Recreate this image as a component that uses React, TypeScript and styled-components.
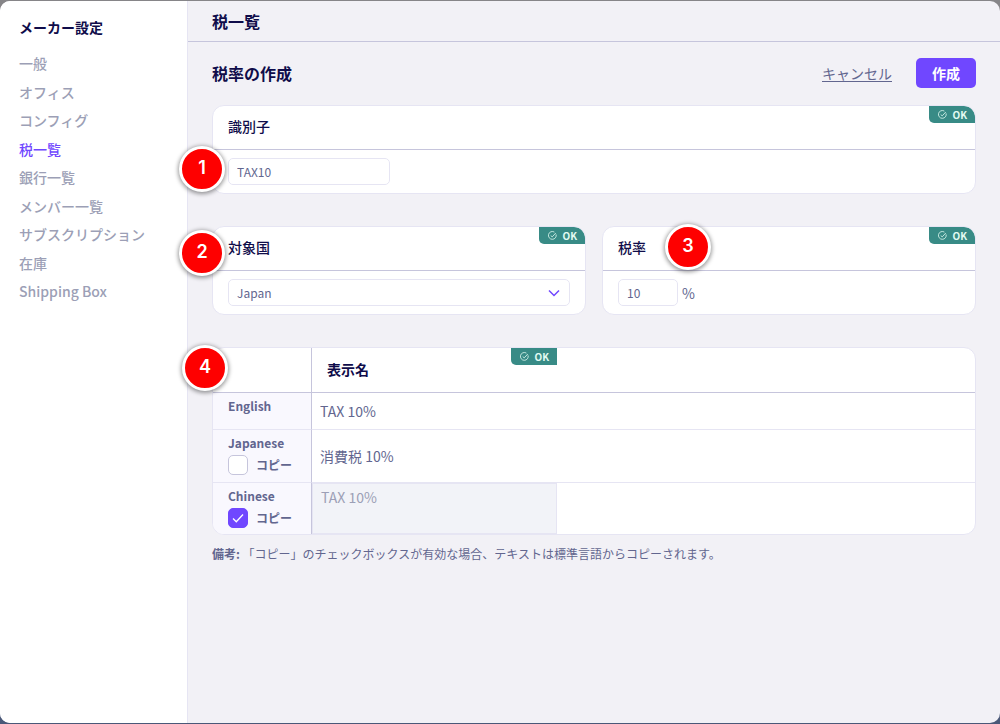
import React, { useState } from "react";
import styled, { createGlobalStyle, css } from "styled-components";

const color = {
  ink: "#0f0c4a",
  text: "#62668f",
  muted: "#9c9fb6",
  violet: "#7047ff",
  teal: "#388b86",
  page: "#f2f1f6",
  border: "#e6e5f3",
  line: "#c6c5dc",
};

const GlobalStyle = createGlobalStyle`
  *, *::before, *::after { box-sizing: border-box; }
  body {
    margin: 0;
    color: ${color.text};
    background: linear-gradient(#868588 0, #868588 50%, #4a5878 100%);
    font-family: "Noto Sans CJK JP", "Noto Sans", sans-serif;
    font-size: 14px;
    line-height: 20px;
  }
  button, input, select, textarea { font: inherit; color: inherit; }
`;

const Dialog = styled.div`
  display: flex;
  min-height: calc(100vh - 2px);
  margin: 1px 0;
  border-radius: 10px;
  background: ${color.page};
  overflow: hidden;
`;

const Sidebar = styled.nav`
  flex: 0 0 188px;
  padding: 16px 19px;
  background: #fff;
  border-right: 1px solid ${color.border};
`;

const SidebarTitle = styled.h2`
  margin: 0 0 16px;
  color: ${color.ink};
  font-size: 14px;
  line-height: 20px;
  font-weight: 700;
`;

const NavList = styled.ul`
  display: grid;
  align-content: space-between;
  height: 248px;
  margin: 0;
  padding: 0;
  list-style: none;
`;

const NavItem = styled.li`
  height: 20px;
  white-space: nowrap;
`;

const NavLink = styled.a<{ $active: boolean }>`
  color: ${(p) => (p.$active ? color.violet : color.muted)};
  font-weight: 500;
  text-decoration: none;
`;

const Main = styled.main`
  flex: 1;
  min-width: 0;
`;

const TopBar = styled.header`
  padding: 8px 24px;
  border-bottom: 1px solid ${color.line};
`;

const Heading = styled.h1`
  margin: 0;
  color: ${color.ink};
  font-size: 16px;
  line-height: 24px;
  font-weight: 700;
`;

const Form = styled.form`
  display: flex;
  flex-direction: column;
  gap: 32px;
  padding: 16px 24px;
`;

const FormHeader = styled.div`
  display: flex;
  align-items: center;
  justify-content: space-between;
  margin-bottom: -15px;
`;

const Actions = styled.div`
  display: flex;
  align-items: center;
  gap: 24px;
`;

const CancelLink = styled.a`
  color: ${color.text};
  text-underline-offset: 2px;
`;

const SubmitButton = styled.button`
  padding: 5px 16px;
  border: 0;
  border-radius: 5px;
  background: ${color.violet};
  color: #fff;
  font-weight: 700;
  line-height: 20px;
`;

const CardRow = styled.div`
  display: grid;
  grid-template-columns: 1fr 1fr;
  gap: 16px;
`;

const CardWrap = styled.section`
  position: relative;
`;

const CardBox = styled.div`
  border: 1px solid ${color.border};
  border-radius: 12px;
  background: #fff;
  overflow: hidden;
`;

const CardHead = styled.div`
  position: relative;
  padding: 10px 15px 13px;
  border-bottom: 1px solid ${color.line};
  color: ${color.ink};
  font-weight: 500;
`;

const CardBody = styled.div`
  display: flex;
  align-items: center;
  gap: 4px;
  padding: 8px 15px;
`;

const BadgeBox = styled.span<{ $rounded: boolean }>`
  position: absolute;
  top: 0;
  right: 0;
  display: flex;
  align-items: center;
  gap: 5px;
  height: 17px;
  padding: 0 8px 0 9px;
  border-radius: 0 ${(p) => (p.$rounded ? 11 : 0)}px 0 5px;
  background: ${color.teal};
  color: #e2fbf2;
  font-size: 10px;
  line-height: 16px;
  font-weight: 700;
`;

const fieldStyle = css`
  height: 27px;
  border: 1px solid ${color.border};
  border-radius: 5px;
  background: #fff;
  color: ${color.text};
  font-size: 12px;
  line-height: 16px;
  padding: 0 8px;
`;

const TextInput = styled.input<{ $width: number }>`
  ${fieldStyle}
  width: ${(p) => p.$width}px;
`;

const SelectWrap = styled.span`
  position: relative;
  flex: 1;
  display: flex;
`;

const Select = styled.select`
  ${fieldStyle}
  flex: 1;
  appearance: none;
`;

const SelectArrow = styled.svg`
  position: absolute;
  right: 10px;
  top: 8px;
  pointer-events: none;
`;

const Marker = styled.span<{ $left: number; $top: number }>`
  position: absolute;
  left: ${(p) => p.$left}px;
  top: ${(p) => p.$top}px;
  width: 46px;
  height: 46px;
  border: 3px solid #fff;
  border-radius: 50%;
  background: #fe0000;
  box-shadow: 0 1px 4px 1px rgba(0, 0, 0, 0.4);
  color: #fff;
  font-family: Inter, "Liberation Sans", sans-serif;
  font-size: 18px;
  line-height: 38px;
  font-weight: 600;
  text-align: center;
`;

const Table = styled.table`
  width: 100%;
  border-collapse: separate;
  border-spacing: 0;
  table-layout: fixed;
`;

const HeadCell = styled.th<{ $width?: number }>`
  position: relative;
  width: ${(p) => (p.$width ? `${p.$width}px` : "auto")};
  height: 45px;
  padding: 0 15px 2px;
  border-bottom: 1px solid ${color.line};
  color: ${color.ink};
  font-weight: 700;
  text-align: left;
  &:first-child { border-right: 1px solid ${color.line}; }
`;

const LangCell = styled.th`
  padding: 3px 15px 4px;
  border-right: 1px solid ${color.line};
  border-bottom: 1px solid ${color.border};
  background: #f9f8fe;
  font-size: 12px;
  line-height: 20px;
  font-weight: 700;
  text-align: left;
  vertical-align: top;
  tr:last-child > & { border-bottom: 0; }
`;

const ValueCell = styled.td<{ $height: number }>`
  height: ${(p) => p.$height}px;
  padding: 0;
  border-bottom: 1px solid ${color.border};
  tr:last-child > & { border-bottom: 0; }
`;

const ValueInput = styled.input`
  display: block;
  width: 100%;
  height: 20px;
  padding: 0 8px;
  border: 0;
  background: transparent;
`;

const ValueArea = styled.textarea`
  display: block;
  width: 100%;
  height: 51px;
  padding: 3px 8px;
  border: 1px solid ${color.border};
  background: #f2f3f8;
  color: ${color.muted};
  resize: none;
`;

const CopyLabel = styled.label`
  display: flex;
  align-items: center;
  gap: 8px;
  height: 24px;
`;

const CopyBox = styled.input`
  appearance: none;
  width: 20px;
  height: 20px;
  margin: 0;
  border: 1px solid ${color.line};
  border-radius: 5px;
  background: #fff;
  &:checked { border-color: ${color.violet}; background: ${color.violet}; }
`;

const CopyControl = styled.span`
  position: relative;
  display: flex;
`;

const Tick = styled.svg`
  position: absolute;
  inset: 0;
  pointer-events: none;
`;

const Note = styled.p`
  margin: -23px 0 0;
  font-size: 12px;
  line-height: 20px;
`;

const OkBadge = ({ rounded = true }: { rounded?: boolean }) => (
  <BadgeBox $rounded={rounded}>
    <svg width="9" height="9" viewBox="0 0 9 9" fill="none" stroke="currentColor" strokeWidth="0.8" aria-hidden="true">
      <path d="M8.1 3.4A3.9 3.9 0 1 1 6.4 1.1" />
      <path d="M2.7 4.5 4.2 5.9 7.8 2" />
    </svg>
    OK
  </BadgeBox>
);

const CopyToggle = ({ initial }: { initial: boolean }) => {
  const [checked, setChecked] = useState(initial);
  return (
    <CopyLabel>
      <CopyControl>
        <CopyBox type="checkbox" checked={checked} onChange={(e) => setChecked(e.target.checked)} />
        {checked && (
          <Tick width="20" height="20" viewBox="0 0 20 20" fill="none" stroke="#fff" strokeWidth="1.3" aria-hidden="true">
            <path d="m5 10.5 3.3 3.3L15 6.5" />
          </Tick>
        )}
      </CopyControl>
      コピー
    </CopyLabel>
  );
};

const navItems = [
  "一般",
  "オフィス",
  "コンフィグ",
  "税一覧",
  "銀行一覧",
  "メンバー一覧",
  "サブスクリプション",
  "在庫",
  "Shipping Box",
];

export default function App() {
  return (
    <>
      <GlobalStyle />
      <Dialog>
        <Sidebar>
          <SidebarTitle>メーカー設定</SidebarTitle>
          <NavList>
            {navItems.map((item) => (
              <NavItem key={item}>
                <NavLink href="#" $active={item === "税一覧"}>{item}</NavLink>
              </NavItem>
            ))}
          </NavList>
        </Sidebar>
        <Main>
          <TopBar>
            <Heading>税一覧</Heading>
          </TopBar>
          <Form onSubmit={(e) => e.preventDefault()}>
            <FormHeader>
              <Heading as="h2">税率の作成</Heading>
              <Actions>
                <CancelLink href="#">キャンセル</CancelLink>
                <SubmitButton type="submit">作成</SubmitButton>
              </Actions>
            </FormHeader>

            <CardWrap>
              <CardBox>
                <CardHead>
                  <label htmlFor="identifier">識別子</label>
                  <OkBadge />
                </CardHead>
                <CardBody>
                  <TextInput id="identifier" $width={162} defaultValue="TAX10" />
                </CardBody>
              </CardBox>
              <Marker $left={-33} $top={41}>1</Marker>
            </CardWrap>

            <CardRow>
              <CardWrap>
                <CardBox>
                  <CardHead>
                    <label htmlFor="country">対象国</label>
                    <OkBadge />
                  </CardHead>
                  <CardBody>
                    <SelectWrap>
                      <Select id="country" defaultValue="Japan">
                        <option>Japan</option>
                      </Select>
                      <SelectArrow width="12" height="12" viewBox="0 0 12 12" fill="none" stroke={color.violet} strokeWidth="1.5" aria-hidden="true">
                        <path d="m1 3.5 5 5 5-5" />
                      </SelectArrow>
                    </SelectWrap>
                  </CardBody>
                </CardBox>
                <Marker $left={-33} $top={4}>2</Marker>
              </CardWrap>
              <CardWrap>
                <CardBox>
                  <CardHead>
                    <label htmlFor="rate">税率</label>
                    <OkBadge />
                  </CardHead>
                  <CardBody>
                    <TextInput id="rate" $width={60} defaultValue="10" />
                    <span>%</span>
                  </CardBody>
                </CardBox>
                <Marker $left={63} $top={-2}>3</Marker>
              </CardWrap>
            </CardRow>

            <CardWrap>
              <CardBox>
                <Table>
                  <thead>
                    <tr>
                      <HeadCell $width={99} />
                      <HeadCell $width={245} scope="col">
                        表示名
                        <OkBadge rounded={false} />
                      </HeadCell>
                      <HeadCell />
                    </tr>
                  </thead>
                  <tbody>
                    <tr>
                      <LangCell scope="row">English</LangCell>
                      <ValueCell $height={37} colSpan={2}>
                        <ValueInput aria-label="English" defaultValue="TAX 10%" />
                      </ValueCell>
                    </tr>
                    <tr>
                      <LangCell scope="row">
                        Japanese
                        <CopyToggle initial={false} />
                      </LangCell>
                      <ValueCell $height={53} colSpan={2}>
                        <ValueInput aria-label="Japanese" defaultValue="消費税 10%" />
                      </ValueCell>
                    </tr>
                    <tr>
                      <LangCell scope="row">
                        Chinese
                        <CopyToggle initial={true} />
                      </LangCell>
                      <ValueCell $height={51}>
                        <ValueArea aria-label="Chinese" disabled defaultValue="TAX 10%" />
                      </ValueCell>
                      <ValueCell $height={51} />
                    </tr>
                  </tbody>
                </Table>
              </CardBox>
              <Marker $left={-30} $top={-2}>4</Marker>
            </CardWrap>

            <Note>
              <b>備考:</b> 「コピー」のチェックボックスが有効な場合、テキストは標準言語からコピーされます。
            </Note>
          </Form>
        </Main>
      </Dialog>
    </>
  );
}
